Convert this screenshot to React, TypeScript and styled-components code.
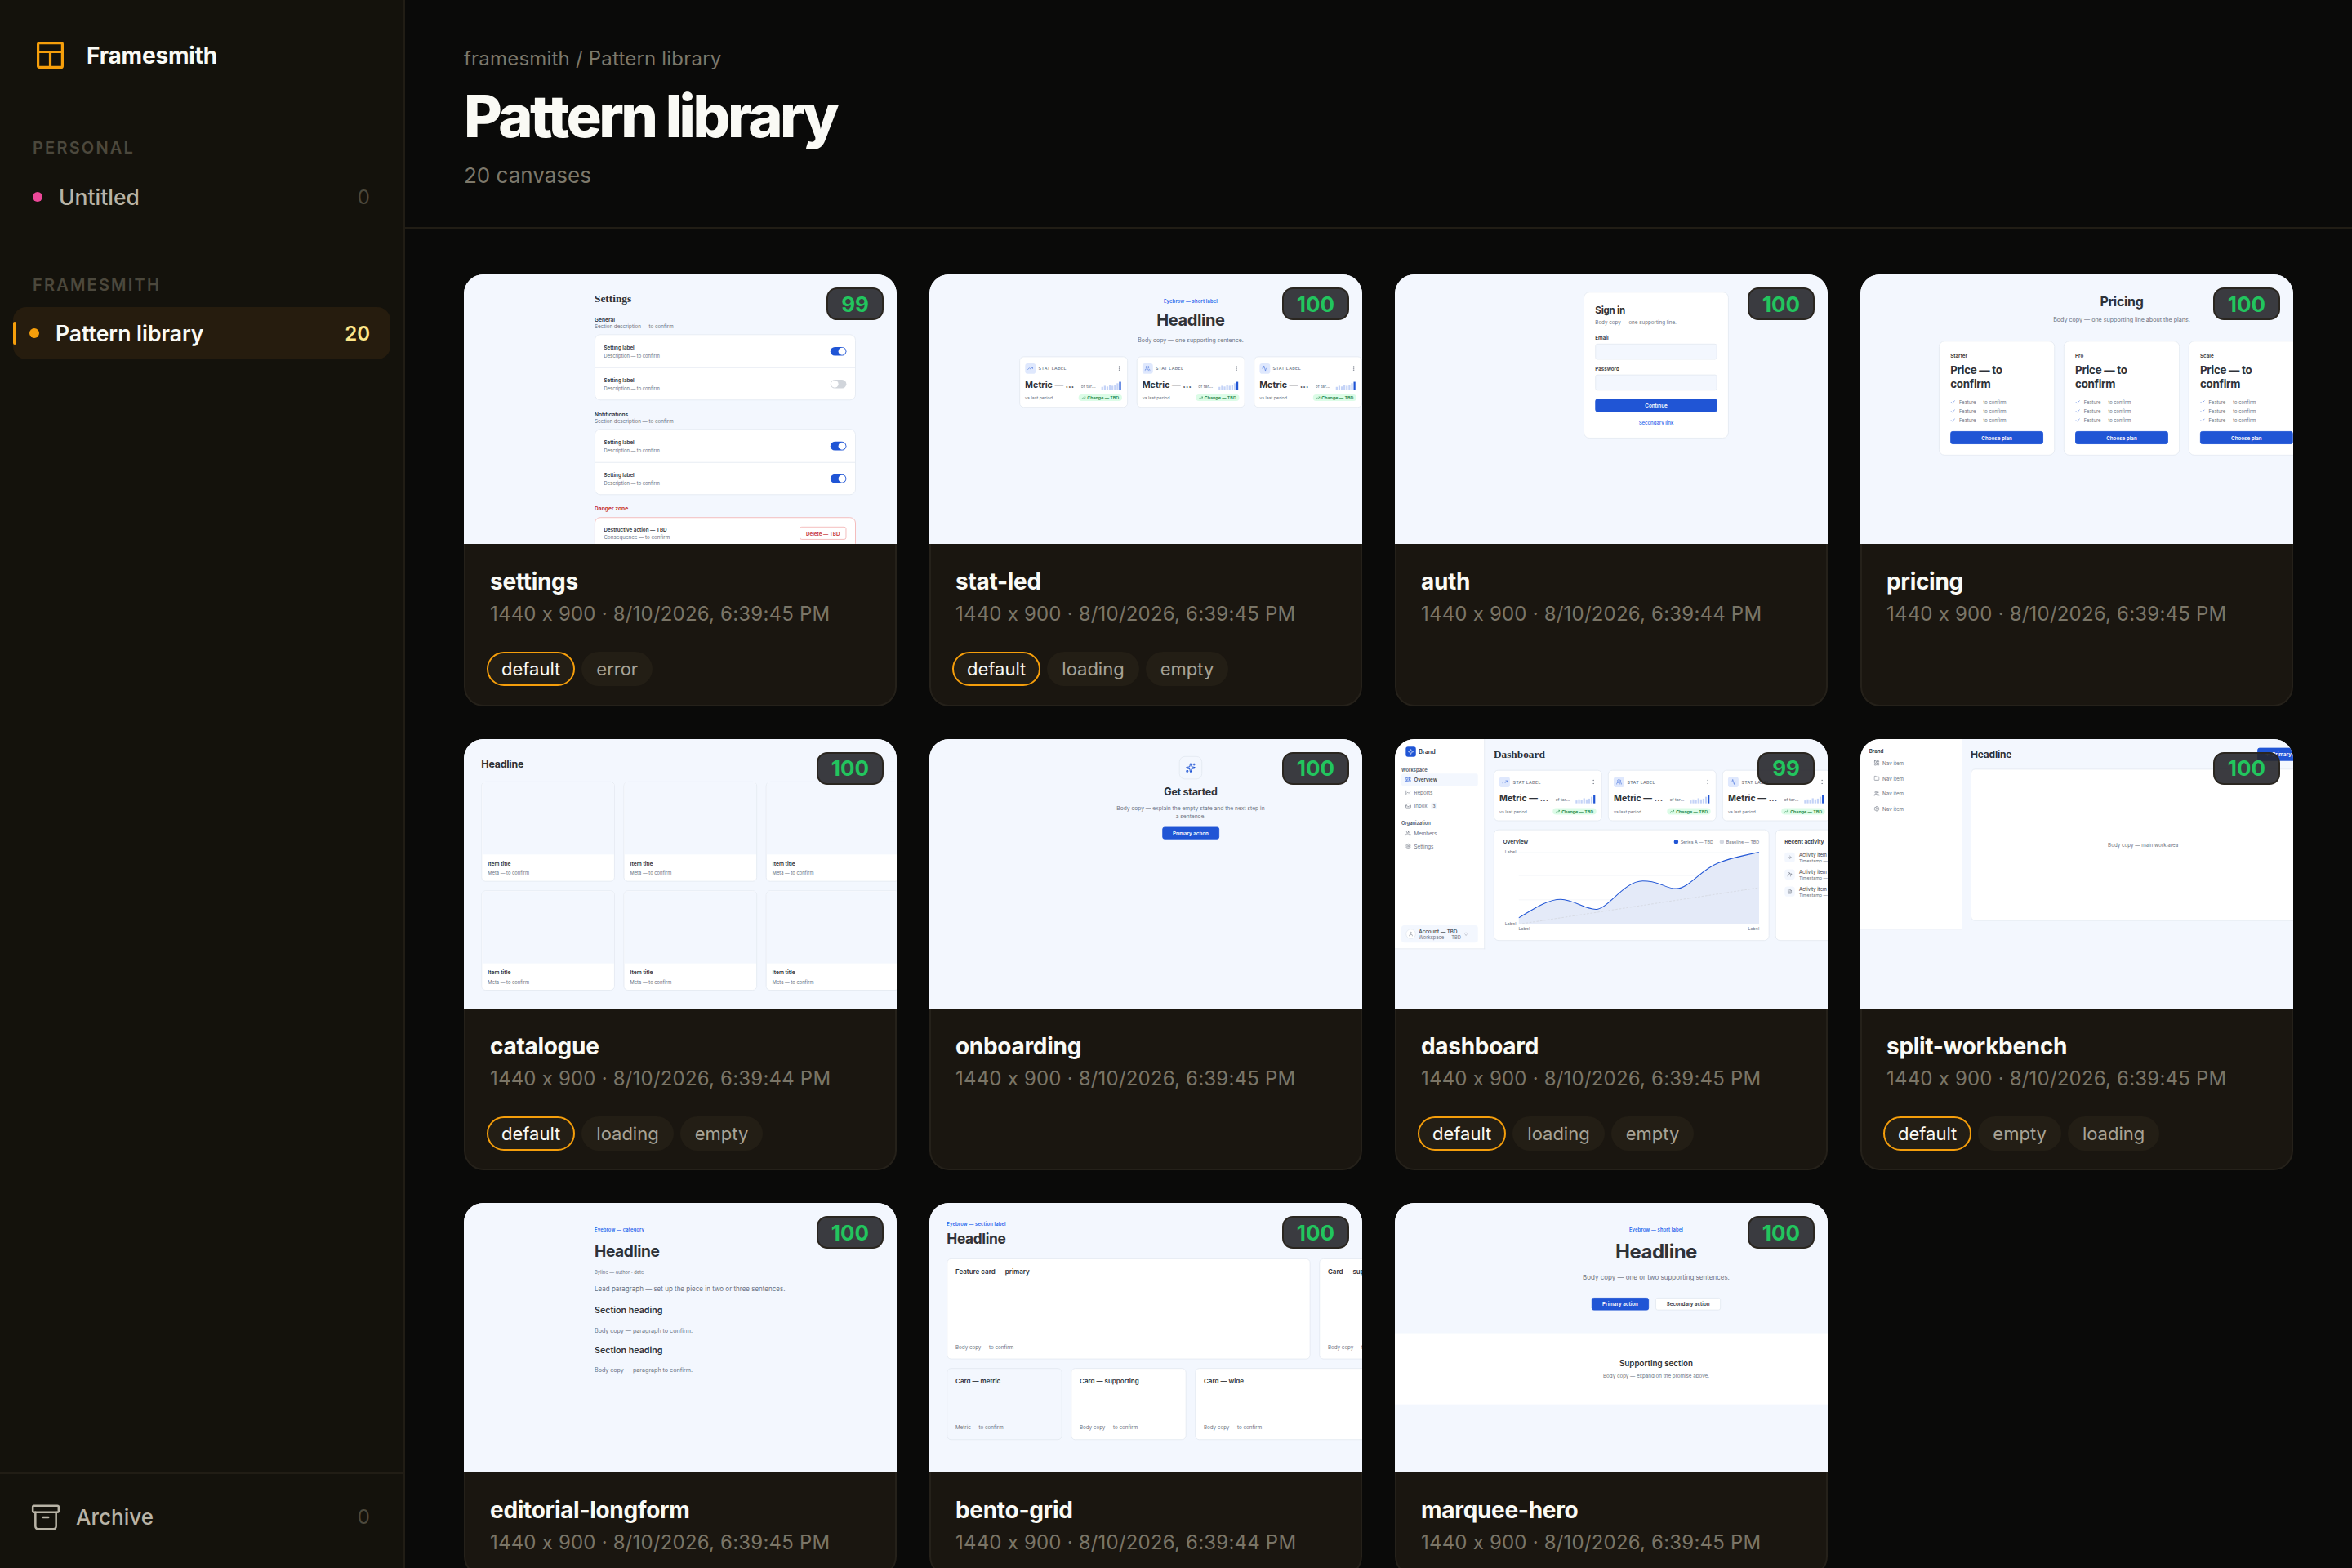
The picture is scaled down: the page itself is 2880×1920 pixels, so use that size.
import React from 'react';
import styled, { createGlobalStyle } from 'styled-components';
import {
    Activity,
    Archive,
    ArrowRight,
    ChartLine,
    Check,
    ChevronsUpDown,
    FileText,
    Folder,
    Inbox,
    LayoutDashboard,
    MoreVertical,
    Plus,
    Search,
    Settings,
    Sparkle,
    Sparkles,
    TrendingUp,
    User,
    UserPlus,
    Users,
} from 'lucide-react';

const BLUE = '#2055d5';
const INK = '#2f3238';
const MUTED = '#6b7280';
const LINE = '#e4e9f2';
const PAGE = '#f3f7fe';

const GlobalStyle = createGlobalStyle`
    * { box-sizing: border-box; }
    html, body { margin: 0; padding: 0; background: #0a0a09; }
    body {
        font-family: Inter, "Liberation Sans", sans-serif;
        font-feature-settings: "calt" 0;
    }
`;

const Shell = styled.div`
    display: flex;
    width: 2880px;
    height: 1920px;
    overflow: hidden;
    background: #0a0a09;
`;

/* ---- app sidebar ---- */

const Side = styled.aside`
    flex: 0 0 496px;
    display: flex;
    flex-direction: column;
    background: #14120c;
    border-right: 2px solid #211d15;
    padding-top: 50px;
`;

const Logo = styled.div`
    display: flex;
    align-items: center;
    gap: 28px;
    height: 35px;
    padding-left: 45px;
    font-size: 28px;
    font-weight: 700;
    letter-spacing: -0.2px;
    color: #fafaf5;
`;

const GroupLabel = styled.div<{ $top: number }>`
    margin-top: ${(p) => p.$top}px;
    padding-left: 40px;
    font-size: 20px;
    line-height: 26px;
    font-weight: 600;
    letter-spacing: 2.2px;
    color: #4c483c;
`;

const Project = styled.div<{ $active?: boolean }>`
    position: relative;
    display: flex;
    align-items: center;
    gap: 20px;
    height: 64px;
    margin: ${(p) => (p.$active ? '14px 16px 0' : '15px 16px 0')};
    padding: ${(p) => (p.$active ? '0 25px 0 20px' : '0 25px 0 24px')};
    border-radius: 16px;
    background: ${(p) => (p.$active ? '#261c0e' : 'transparent')};
    color: ${(p) => (p.$active ? '#fafaf5' : '#b8b3a6')};
    font-size: 26.5px;
    font-weight: ${(p) => (p.$active ? 600 : 500)};
`;

const ActiveBar = styled.span`
    position: absolute;
    left: 0;
    top: 18px;
    width: 4px;
    height: 28px;
    border-radius: 2px;
    background: #f59e0b;
`;

const Dot = styled.span<{ $color: string }>`
    flex: none;
    width: 12px;
    height: 12px;
    border-radius: 50%;
    background: ${(p) => p.$color};
`;

const Count = styled.span<{ $active?: boolean }>`
    margin-left: auto;
    font-size: 24px;
    font-weight: ${(p) => (p.$active ? 600 : 400)};
    color: ${(p) => (p.$active ? '#fde68a' : '#4c483c')};
`;

const SideFoot = styled.div`
    margin-top: auto;
    height: 117px;
    display: flex;
    align-items: center;
    gap: 18px;
    padding: 0 41px 10px 37px;
    border-top: 2px solid #211d15;
    font-size: 26px;
    font-weight: 500;
    color: #b8b3a6;
`;

/* ---- main ---- */

const Main = styled.main`
    flex: 1;
    min-width: 0;
`;

const Header = styled.header`
    height: 280px;
    padding: 56px 72px 0;
    border-bottom: 2px solid #211d15;
`;

const Crumb = styled.div`
    font-size: 24px;
    line-height: 32px;
    letter-spacing: 0.2px;
    color: #7d786a;
`;

const PageTitle = styled.h1`
    margin: 14px 0 0;
    font-size: 72px;
    line-height: 80px;
    font-weight: 800;
    letter-spacing: -3.5px;
    color: #fafaf5;
`;

const PageCount = styled.div`
    margin-top: 15px;
    font-size: 26px;
    line-height: 36px;
    color: #7d786a;
`;

const Grid = styled.div`
    display: grid;
    grid-template-columns: repeat(4, 530px);
    gap: 40px;
    padding: 56px 72px 0;
`;

const Card = styled.article`
    position: relative;
    border-radius: 24px;
    overflow: hidden;
    background: #1a1610;
    display: flex;
    flex-direction: column;
`;

const Thumb = styled.div`
    flex: none;
    height: 330px;
    overflow: hidden;
    background: ${PAGE};
`;

const Frame = styled.div`
    width: 1440px;
    height: 900px;
    background: ${PAGE};
    color: ${INK};
    transform: scale(0.4444);
    transform-origin: top left;
    overflow: hidden;
`;

const Score = styled.div`
    position: absolute;
    top: 16px;
    right: 16px;
    display: flex;
    align-items: center;
    height: 40px;
    padding: 0 16px;
    border-radius: 13px;
    background: rgba(38, 38, 43, 0.9);
    border: 2px solid #2a2620;
    color: #22c55e;
    font-size: 26px;
    font-weight: 700;
`;

const Info = styled.div`
    flex: 1;
    padding: 28px 30px 22.5px;
    border: 2px solid #25211a;
    border-top: none;
    border-radius: 0 0 24px 24px;
`;

const CardName = styled.h2`
    margin: 0;
    font-size: 28px;
    line-height: 36px;
    font-weight: 700;
    letter-spacing: -0.3px;
    color: #fafaf5;
`;

const CardMeta = styled.div`
    margin-top: 6px;
    font-size: 24px;
    line-height: 32px;
    letter-spacing: 0.2px;
    color: #7a7567;
    white-space: nowrap;
`;

const Tags = styled.div`
    display: flex;
    gap: 8px;
    margin: 30px 0 0 -4px;
`;

const Tag = styled.span<{ $on?: boolean }>`
    display: flex;
    align-items: center;
    height: 42px;
    padding: 0 16px;
    border-radius: 21px;
    font-size: 22px;
    background: #231e15;
    color: ${(p) => (p.$on ? '#fafaf5' : '#a8a396')};
    border: 2px solid ${(p) => (p.$on ? '#f59e0b' : 'transparent')};
`;

/* ---- shared bits of the little pages ---- */

const Eyebrow = styled.div<{ $top?: number }>`
    margin-top: ${(p) => p.$top ?? 0}px;
    font-size: 13px;
    line-height: 18px;
    font-weight: 600;
    letter-spacing: 0.4px;
    color: #2563eb;
`;

const Heading = styled.div<{ $size: number; $line: number; $top?: number }>`
    margin-top: ${(p) => p.$top ?? 0}px;
    font-size: ${(p) => p.$size}px;
    line-height: ${(p) => p.$line}px;
    font-weight: 700;
    letter-spacing: -0.02em;
    color: ${INK};
`;

const SerifTitle = styled.div`
    font-family: "Liberation Serif", serif;
    font-size: 30px;
    line-height: 36px;
    font-weight: 700;
    color: ${INK};
`;

const Copy = styled.div<{ $size?: number; $line?: number; $top?: number; $color?: string }>`
    margin-top: ${(p) => p.$top ?? 0}px;
    font-size: ${(p) => p.$size ?? 14}px;
    line-height: ${(p) => p.$line ?? 18}px;
    color: ${(p) => p.$color ?? MUTED};
`;

const Strong = styled.div<{ $size?: number; $line?: number; $top?: number }>`
    margin-top: ${(p) => p.$top ?? 0}px;
    font-size: ${(p) => p.$size ?? 14}px;
    line-height: ${(p) => p.$line ?? 20}px;
    font-weight: 600;
    color: ${INK};
`;

const Button = styled.div<{ $ghost?: boolean; $w?: number; $h?: number; $top?: number }>`
    display: flex;
    align-items: center;
    justify-content: center;
    gap: 6px;
    flex: none;
    width: ${(p) => (p.$w ? `${p.$w}px` : 'auto')};
    height: ${(p) => p.$h ?? 35}px;
    margin-top: ${(p) => p.$top ?? 0}px;
    border-radius: 6px;
    font-size: 14px;
    font-weight: 600;
    background: ${(p) => (p.$ghost ? '#fff' : BLUE)};
    border: 2px solid ${(p) => (p.$ghost ? LINE : BLUE)};
    color: ${(p) => (p.$ghost ? INK : '#fff')};
`;

/* settings */

const NarrowColumn = styled.div<{ $top: number }>`
    width: 720px;
    margin: 0 auto;
    padding-top: ${(p) => p.$top}px;
`;

const SettingsHead = styled.div<{ $top: number }>`
    margin-top: ${(p) => p.$top}px;
`;

const Panel = styled.div<{ $danger?: boolean; $top?: number }>`
    margin-top: ${(p) => p.$top ?? 12}px;
    background: #fff;
    border: 2px solid ${(p) => (p.$danger ? '#f3b4b4' : LINE)};
    border-radius: 16px;
`;

const SettingRow = styled.div<{ $h?: number }>`
    display: flex;
    align-items: center;
    justify-content: space-between;
    height: ${(p) => p.$h ?? 89}px;
    padding: 0 24px;
    & + & {
        border-top: 2px solid ${LINE};
    }
`;

const Toggle = styled.span<{ $on?: boolean }>`
    display: flex;
    justify-content: ${(p) => (p.$on ? 'flex-end' : 'flex-start')};
    width: 44px;
    height: 24px;
    padding: 2px;
    border-radius: 12px;
    background: ${(p) => (p.$on ? BLUE : '#d1d5db')};
    &::after {
        content: '';
        width: 20px;
        height: 20px;
        border-radius: 50%;
        background: #fff;
    }
`;

const DeleteButton = styled.div`
    display: flex;
    align-items: center;
    height: 36px;
    padding: 0 16px;
    border: 2px solid #f3b4b4;
    border-radius: 6px;
    font-size: 14px;
    font-weight: 600;
    color: #c53030;
`;

/* stats */

const Center = styled.div<{ $top: number }>`
    display: flex;
    flex-direction: column;
    align-items: center;
    text-align: center;
    padding-top: ${(p) => p.$top}px;
`;

const StatRow = styled.div<{ $gap: number; $top: number }>`
    display: flex;
    gap: ${(p) => p.$gap}px;
    margin-top: ${(p) => p.$top}px;
`;

const StatCard = styled.div`
    flex: none;
    width: 299px;
    height: 141px;
    padding: 16px 14px;
    background: #fff;
    border: 2px solid ${LINE};
    border-radius: 12px;
    text-align: left;
`;

const StatTop = styled.div`
    display: flex;
    align-items: center;
    gap: 8px;
    height: 30px;
    color: ${MUTED};
`;

const IconBox = styled.span<{ $size?: number; $bg?: string; $color?: string }>`
    flex: none;
    display: flex;
    align-items: center;
    justify-content: center;
    width: ${(p) => p.$size ?? 29}px;
    height: ${(p) => p.$size ?? 29}px;
    border-radius: 7px;
    background: ${(p) => p.$bg ?? '#dfe8fd'};
    color: ${(p) => p.$color ?? BLUE};
`;

const StatLabel = styled.span`
    flex: 1;
    font-size: 12px;
    font-weight: 500;
    letter-spacing: 0.7px;
    color: ${MUTED};
`;

const StatMid = styled.div`
    display: flex;
    align-items: flex-end;
    height: 38px;
    margin-top: 10px;
`;

const StatValue = styled.span`
    width: 137px;
    font-size: 24px;
    line-height: 36px;
    font-weight: 700;
    color: ${INK};
    white-space: nowrap;
    overflow: hidden;
    text-overflow: ellipsis;
`;

const StatSub = styled.span`
    width: 42px;
    margin: 0 0 5px 17px;
    font-size: 12px;
    line-height: 16px;
    color: ${MUTED};
    white-space: nowrap;
    overflow: hidden;
    text-overflow: ellipsis;
`;

const Bars = styled.span`
    display: flex;
    align-items: flex-end;
    gap: 2px;
    height: 22px;
    margin: 0 0 4px 14px;
`;

const Bar = styled.span<{ $h: number; $last?: boolean }>`
    width: 5px;
    height: ${(p) => p.$h}px;
    background: ${(p) => (p.$last ? BLUE : '#c4d3f7')};
`;

const StatFoot = styled.div`
    display: flex;
    align-items: center;
    justify-content: space-between;
    height: 18px;
    margin-top: 9px;
    font-size: 12px;
    color: ${MUTED};
`;

const Delta = styled.span`
    display: flex;
    align-items: center;
    gap: 4px;
    height: 18px;
    padding: 0 8px;
    border-radius: 9px;
    background: #dcfce7;
    color: #15803d;
    font-weight: 600;
`;

/* auth + pricing */

const AuthCard = styled.div`
    width: 400px;
    height: 404px;
    margin: 48px auto 0;
    padding: 33px 30px;
    background: #fff;
    border: 2px solid ${LINE};
    border-radius: 16px;
`;

const Field = styled.div<{ $top: number }>`
    height: 44px;
    margin-top: ${(p) => p.$top}px;
    background: ${PAGE};
    border: 2px solid ${LINE};
    border-radius: 6px;
`;

const LinkText = styled.div`
    margin-top: 22px;
    text-align: center;
    font-size: 13.5px;
    line-height: 18px;
    font-weight: 500;
    color: #2563eb;
`;

const PriceGrid = styled.div`
    display: grid;
    grid-template-columns: repeat(3, 320px);
    gap: 24px;
    justify-content: center;
    width: 100%;
    margin-top: 46px;
    text-align: left;
`;

const PriceCard = styled.div`
    height: 316px;
    padding: 30px;
    background: #fff;
    border: 2px solid ${LINE};
    border-radius: 16px;
`;

const FeatureList = styled.div`
    margin-top: 18px;
    margin-bottom: 18px;
`;

const Feature = styled.div`
    display: flex;
    align-items: center;
    gap: 10px;
    height: 25px;
    font-size: 13px;
    color: ${MUTED};
`;

/* catalogue */

const Pad = styled.div<{ $top: number }>`
    padding: ${(p) => p.$top}px 48px 0;
`;

const ItemGrid = styled.div`
    display: grid;
    grid-template-columns: repeat(3, 368px);
    gap: 24px;
    margin-top: 31px;
`;

const Item = styled.div`
    height: 276px;
    background: #fff;
    border: 2px solid ${LINE};
    border-radius: 12px;
    overflow: hidden;
`;

const ItemImage = styled.div`
    height: 199px;
    background: ${PAGE};
`;

const ItemText = styled.div`
    padding: 15px 16px;
`;

/* onboarding */

const EmptyIcon = styled.div`
    display: flex;
    align-items: center;
    justify-content: center;
    width: 64px;
    height: 64px;
    background: ${PAGE};
    border: 2px solid ${LINE};
    border-radius: 16px;
    color: ${BLUE};
`;

/* dashboard + workbench */

const Split = styled.div`
    display: flex;
    align-items: flex-start;
    height: 100%;
`;

const DashSide = styled.div`
    flex: none;
    display: flex;
    flex-direction: column;
    width: 248px;
    height: 579px;
    padding: 21px 17px 16px 18px;
    background: #fff;
    border-right: 2px solid ${LINE};
    border-bottom: 2px solid ${LINE};
`;

const BrandRow = styled.div`
    display: flex;
    align-items: center;
    gap: 8px;
    height: 28px;
    margin-left: 12px;
    font-size: 16px;
    font-weight: 600;
`;

const BrandMark = styled.span`
    display: flex;
    align-items: center;
    justify-content: center;
    width: 28px;
    height: 28px;
    border-radius: 6px;
    background: ${BLUE};
    color: #fff;
`;

const NavLabel = styled.div<{ $top: number }>`
    margin-top: ${(p) => p.$top}px;
    font-size: 13px;
    line-height: 16px;
    font-weight: 600;
    color: #4b5563;
`;

const NavItem = styled.div<{ $active?: boolean; $h?: number; $pad?: number }>`
    display: flex;
    align-items: center;
    gap: 8px;
    height: ${(p) => p.$h ?? 34}px;
    margin-top: 2px;
    padding-left: ${(p) => p.$pad ?? 11}px;
    border-radius: 6px;
    font-size: 14px;
    font-weight: ${(p) => (p.$active ? 500 : 400)};
    background: ${(p) => (p.$active ? PAGE : 'transparent')};
    color: ${(p) => (p.$active ? INK : MUTED)};
    svg {
        color: ${(p) => (p.$active ? BLUE : MUTED)};
    }
`;

const NavBadge = styled.span`
    display: flex;
    align-items: center;
    justify-content: center;
    width: 18px;
    height: 18px;
    margin-left: 2px;
    border-radius: 5px;
    background: ${PAGE};
    font-size: 11px;
    font-weight: 600;
`;

const AccountCard = styled.div`
    display: flex;
    align-items: center;
    gap: 8px;
    height: 48px;
    margin-top: auto;
    padding: 0 12px;
    border-radius: 8px;
    background: ${PAGE};
`;

const Avatar = styled.span`
    flex: none;
    display: flex;
    align-items: center;
    justify-content: center;
    width: 28px;
    height: 28px;
    border-radius: 50%;
    background: #fff;
    border: 2px solid ${LINE};
    color: ${MUTED};
`;

const AccountName = styled.div`
    font-size: 14px;
    line-height: 17px;
    font-weight: 500;
    color: ${INK};
    white-space: nowrap;
`;

const AccountSub = styled.div`
    font-size: 13px;
    line-height: 16px;
    color: ${MUTED};
    white-space: nowrap;
`;

const DashMain = styled.div`
    flex: none;
    width: 1192px;
    padding: 24px;
`;

const TitleRow = styled.div`
    display: flex;
    align-items: center;
    justify-content: space-between;
    height: 36px;
`;

const SearchBox = styled.div`
    flex: none;
    display: flex;
    align-items: center;
    gap: 8px;
    width: 240px;
    height: 36px;
    padding: 0 12px;
    margin-right: -50px;
    background: #fff;
    border: 2px solid ${LINE};
    border-radius: 6px;
    font-size: 13px;
    color: ${MUTED};
`;

const ChartRow = styled.div`
    display: flex;
    gap: 16px;
    margin-top: 23px;
`;

const ChartCard = styled.div`
    flex: none;
    width: 760px;
    height: 307px;
    padding: 22px 24px;
    background: #fff;
    border: 2px solid ${LINE};
    border-radius: 14px;
`;

const ChartHead = styled.div`
    display: flex;
    align-items: center;
    justify-content: space-between;
    height: 20px;
    padding-right: 2px;
`;

const Legend = styled.div`
    display: flex;
    align-items: center;
    gap: 6px;
    font-size: 12px;
    color: ${MUTED};
`;

const LegendGap = styled.span`
    width: 6px;
`;

const ChartBody = styled.div`
    display: grid;
    grid-template-columns: 36px 663px;
    column-gap: 7px;
    margin-top: 18px;
`;

const YAxis = styled.div`
    display: flex;
    flex-direction: column;
    justify-content: space-between;
    align-items: flex-end;
    height: 215px;
    margin-top: -8px;
    font-size: 12px;
    line-height: 16px;
    color: ${MUTED};
`;

const XAxis = styled.div`
    grid-column: 2;
    display: flex;
    justify-content: space-between;
    margin-top: -4px;
    font-size: 12px;
    line-height: 16px;
    color: ${MUTED};
`;

const ActivityCard = styled.div`
    flex: none;
    width: 300px;
    height: 307px;
    padding: 22px 24px;
    background: #fff;
    border: 2px solid ${LINE};
    border-radius: 14px;
`;

const ActivityItem = styled.div`
    display: flex;
    gap: 12px;
    height: 28px;
    margin-top: 19px;
    &:first-of-type {
        margin-top: 17px;
    }
`;

const WorkSide = styled.div`
    flex: none;
    width: 280px;
    height: 525px;
    padding: 24px;
    background: #fff;
    border-bottom: 2px solid ${LINE};
`;

const WorkMain = styled.div`
    flex: none;
    width: 998px;
    padding: 24px;
`;

const WorkPanel = styled.div`
    display: flex;
    align-items: center;
    justify-content: center;
    height: 419px;
    margin-top: 22px;
    background: #fff;
    border: 2px solid ${LINE};
    border-radius: 12px;
`;

/* bento + marquee */

const BentoGrid = styled.div`
    display: grid;
    grid-template-columns: repeat(4, 318px);
    grid-template-rows: 278px 198px;
    gap: 24px;
    margin-top: 32px;
`;

const BentoCard = styled.div<{ $span?: number; $flat?: boolean }>`
    grid-column: span ${(p) => p.$span ?? 1};
    display: flex;
    flex-direction: column;
    justify-content: space-between;
    padding: 24px 22px;
    background: ${(p) => (p.$flat ? PAGE : '#fff')};
    border: 2px solid ${LINE};
    border-radius: 12px;
`;

const Hero = styled.div`
    height: 359px;
    padding-top: 64px;
    display: flex;
    flex-direction: column;
    align-items: center;
    text-align: center;
`;

const ButtonRow = styled.div`
    display: flex;
    gap: 18px;
    margin-top: 41px;
`;

const Band = styled.div`
    display: flex;
    flex-direction: column;
    align-items: center;
    justify-content: center;
    height: 196px;
    background: #fff;
`;

/* ---- previews ---- */

const SettingPair = ({ on }: { on: boolean[] }) => (
    <Panel>
        {on.map((value, i) => (
            <SettingRow key={i}>
                <div>
                    <Strong>Setting label</Strong>
                    <Copy $size={13} $top={4}>
                        Description — to confirm
                    </Copy>
                </div>
                <Toggle $on={value} />
            </SettingRow>
        ))}
    </Panel>
);

const SettingsPreview = () => (
    <NarrowColumn $top={48}>
        <SerifTitle>Settings</SerifTitle>
        <SettingsHead $top={33}>
            <Strong $size={15} $line={18}>
                General
            </Strong>
            <Copy>Section description — to confirm</Copy>
        </SettingsHead>
        <SettingPair on={[true, false]} />
        <SettingsHead $top={31}>
            <Strong $size={15} $line={18}>
                Notifications
            </Strong>
            <Copy>Section description — to confirm</Copy>
        </SettingsHead>
        <SettingPair on={[true, true]} />
        <SettingsHead $top={29}>
            <Copy $size={15} $color="#c53030">
                <b>Danger zone</b>
            </Copy>
        </SettingsHead>
        <Panel $danger $top={14}>
            <SettingRow $h={84}>
                <div>
                    <Strong>Destructive action — TBD</Strong>
                    <Copy $top={1}>Consequence — to confirm</Copy>
                </div>
                <DeleteButton>Delete — TBD</DeleteButton>
            </SettingRow>
        </Panel>
    </NarrowColumn>
);

const barHeights = [8, 11, 9, 14, 11, 13, 18, 22];

const Stat = ({ icon: Icon }: { icon: any }) => (
    <StatCard>
        <StatTop>
            <IconBox>
                <Icon size={16} strokeWidth={1.6} />
            </IconBox>
            <StatLabel>STAT LABEL</StatLabel>
            <MoreVertical size={16} />
        </StatTop>
        <StatMid>
            <StatValue>Metric — to confirm</StatValue>
            <StatSub>of target</StatSub>
            <Bars>
                {barHeights.map((h, i) => (
                    <Bar key={i} $h={h} $last={i === barHeights.length - 1} />
                ))}
            </Bars>
        </StatMid>
        <StatFoot>
            vs last period
            <Delta>
                <TrendingUp size={12} />
                Change — TBD
            </Delta>
        </StatFoot>
    </StatCard>
);

const statIcons = [TrendingUp, Users, Activity];

const StatLedPreview = () => (
    <Center $top={64}>
        <Eyebrow>Eyebrow — short label</Eyebrow>
        <Heading $size={45} $line={48} $top={19}>
            Headline
        </Heading>
        <Copy $size={15.6} $line={24} $top={20}>
            Body copy — one supporting sentence.
        </Copy>
        <StatRow $gap={24} $top={33}>
            {statIcons.map((icon, i) => (
                <Stat key={i} icon={icon} />
            ))}
        </StatRow>
    </Center>
);

const AuthPreview = () => (
    <AuthCard>
        <Heading $size={26} $line={32}>
            Sign in
        </Heading>
        <Copy $line={20} $top={8}>
            Body copy — one supporting line.
        </Copy>
        <Strong $size={14} $line={18} $top={23}>
            Email
        </Strong>
        <Field $top={7} />
        <Strong $size={14} $line={18} $top={16}>
            Password
        </Strong>
        <Field $top={7} />
        <Button $h={36} $top={23}>
            Continue
        </Button>
        <LinkText>Secondary link</LinkText>
    </AuthCard>
);

const PricingPreview = () => (
    <Center $top={52}>
        <Heading $size={36} $line={44}>
            Pricing
        </Heading>
        <Copy $size={16} $line={24} $top={17}>
            Body copy — one supporting line about the plans.
        </Copy>
        <PriceGrid>
            {['Starter', 'Pro', 'Scale'].map((plan) => (
                <PriceCard key={plan}>
                    <Strong $size={14}>{plan}</Strong>
                    <Heading $size={30} $line={38} $top={10}>
                        Price — to confirm
                    </Heading>
                    <FeatureList>
                        {[0, 1, 2].map((i) => (
                            <Feature key={i}>
                                <Check size={14} color={BLUE} />
                                Feature — to confirm
                            </Feature>
                        ))}
                    </FeatureList>
                    <Button $h={36}>Choose plan</Button>
                </PriceCard>
            ))}
        </PriceGrid>
    </Center>
);

const CataloguePreview = () => (
    <Pad $top={50}>
        <Heading $size={28} $line={36}>
            Headline
        </Heading>
        <ItemGrid>
            {[0, 1, 2, 3, 4, 5].map((i) => (
                <Item key={i}>
                    <ItemImage />
                    <ItemText>
                        <Strong $size={15}>Item title</Strong>
                        <Copy $size={13} $line={16} $top={8}>
                            Meta — to confirm
                        </Copy>
                    </ItemText>
                </Item>
            ))}
        </ItemGrid>
    </Pad>
);

const OnboardingBody = styled(Copy)`
    max-width: 420px;
`;

const OnboardingPreview = () => (
    <Center $top={47}>
        <EmptyIcon>
            <Sparkles size={28} strokeWidth={2} />
        </EmptyIcon>
        <Heading $size={28} $line={32} $top={19}>
            Get started
        </Heading>
        <OnboardingBody $size={15} $line={23} $top={17}>
            Body copy — explain the empty state and the next step in a sentence.
        </OnboardingBody>
        <Button $w={157} $h={34} $top={17}>
            Primary action
        </Button>
    </Center>
);

const OverviewChart = () => (
    <svg width="663" height="199" viewBox="0 0 663 199">
        <line x1="0" y1="0" x2="663" y2="0" stroke="#eef1f6" strokeWidth="1.5" />
        <line x1="0" y1="65" x2="663" y2="65" stroke="#eef1f6" strokeWidth="1.5" />
        <line x1="0" y1="132" x2="663" y2="132" stroke="#eef1f6" strokeWidth="1.5" />
        <path
            d="M0 181.5C40 158 80 130 116.5 130.5S180 158 213 158S290 80 342 80S400 101 434.6 101S500 50 551 30S620 12 663 0V199H0Z"
            fill="#e4eaf8"
        />
        <line x1="0" y1="199" x2="663" y2="98.5" stroke="#d5d9e2" strokeWidth="2" strokeDasharray="6 4" />
        <path
            d="M0 181.5C40 158 80 130 116.5 130.5S180 158 213 158S290 80 342 80S400 101 434.6 101S500 50 551 30S620 12 663 0"
            fill="none"
            stroke={BLUE}
            strokeWidth="2.4"
        />
    </svg>
);

const DashboardPreview = () => (
    <Split>
        <DashSide>
            <BrandRow>
                <BrandMark>
                    <Sparkle size={16} />
                </BrandMark>
                Brand
            </BrandRow>
            <NavLabel $top={28}>Workspace</NavLabel>
            <NavItem $active>
                <LayoutDashboard size={16} />
                Overview
            </NavItem>
            <NavItem>
                <ChartLine size={16} />
                Reports
            </NavItem>
            <NavItem>
                <Inbox size={16} />
                Inbox
                <NavBadge>3</NavBadge>
            </NavItem>
            <NavLabel $top={23}>Organization</NavLabel>
            <NavItem>
                <Users size={16} />
                Members
            </NavItem>
            <NavItem>
                <Settings size={16} />
                Settings
            </NavItem>
            <AccountCard>
                <Avatar>
                    <User size={14} />
                </Avatar>
                <div>
                    <AccountName>Account — TBD</AccountName>
                    <AccountSub>Workspace — TBD</AccountSub>
                </div>
                <ChevronsUpDown size={12} color={MUTED} />
            </AccountCard>
        </DashSide>
        <DashMain>
            <TitleRow>
                <SerifTitle>Dashboard</SerifTitle>
                <SearchBox>
                    <Search size={14} />
                    Search
                </SearchBox>
            </TitleRow>
            <StatRow $gap={16} $top={25}>
                {statIcons.map((icon, i) => (
                    <Stat key={i} icon={icon} />
                ))}
            </StatRow>
            <ChartRow>
                <ChartCard>
                    <ChartHead>
                        <Strong $size={15}>Overview</Strong>
                        <Legend>
                            <Dot $color={BLUE} />
                            Series A — TBD
                            <LegendGap />
                            <Dot $color="#d5d9e2" />
                            Baseline — TBD
                        </Legend>
                    </ChartHead>
                    <ChartBody>
                        <YAxis>
                            <span>Label</span>
                            <span>Label</span>
                        </YAxis>
                        <OverviewChart />
                        <XAxis>
                            <span>Label</span>
                            <span>Label</span>
                        </XAxis>
                    </ChartBody>
                </ChartCard>
                <ActivityCard>
                    <Strong $size={15}>Recent activity</Strong>
                    {[ArrowRight, UserPlus, FileText].map((Icon, i) => (
                        <ActivityItem key={i}>
                            <IconBox $size={28} $bg={PAGE} $color={MUTED}>
                                <Icon size={14} />
                            </IconBox>
                            <div>
                                <Copy $size={13} $line={16} $color={INK}>
                                    Activity item — to confirm
                                </Copy>
                                <Copy $size={12} $line={16}>
                                    Timestamp — TBD
                                </Copy>
                            </div>
                        </ActivityItem>
                    ))}
                </ActivityCard>
            </ChartRow>
        </DashMain>
    </Split>
);

const WorkbenchPreview = () => (
    <Split>
        <WorkSide>
            <Strong $size={14}>Brand</Strong>
            {[LayoutDashboard, Folder, Users, Settings].map((Icon, i) => (
                <NavItem key={i} $h={40} $pad={13}>
                    <Icon size={16} />
                    Nav item
                </NavItem>
            ))}
        </WorkSide>
        <WorkMain>
            <TitleRow>
                <Heading $size={27} $line={32}>
                    Headline
                </Heading>
                <Button $w={160} $h={36}>
                    <Plus size={14} />
                    Primary action
                </Button>
            </TitleRow>
            <WorkPanel>
                <Copy>Body copy — main work area</Copy>
            </WorkPanel>
        </WorkMain>
    </Split>
);

const EditorialPreview = () => (
    <NarrowColumn $top={65}>
        <Eyebrow>Eyebrow — category</Eyebrow>
        <Heading $size={43} $line={48} $top={26}>
            Headline
        </Heading>
        <Copy $size={13} $top={24}>
            Byline — author · date
        </Copy>
        <Copy $size={18} $line={28} $top={25}>
            Lead paragraph — set up the piece in two or three sentences.
        </Copy>
        <Strong $size={24} $line={28} $top={29}>
            Section heading
        </Strong>
        <Copy $size={16} $line={24} $top={31}>
            Body copy — paragraph to confirm.
        </Copy>
        <Strong $size={24} $line={28} $top={28}>
            Section heading
        </Strong>
        <Copy $size={16} $line={24} $top={28}>
            Body copy — paragraph to confirm.
        </Copy>
    </NarrowColumn>
);

const bento = [
    { title: 'Feature card — primary', body: 'Body copy — to confirm', span: 3 },
    { title: 'Card — supporting', body: 'Body copy — to confirm' },
    { title: 'Card — metric', body: 'Metric — to confirm', flat: true },
    { title: 'Card — supporting', body: 'Body copy — to confirm' },
    { title: 'Card — wide', body: 'Body copy — to confirm', span: 2 },
];

const BentoPreview = () => (
    <Pad $top={49}>
        <Eyebrow>Eyebrow — section label</Eyebrow>
        <Heading $size={39} $line={44} $top={10}>
            Headline
        </Heading>
        <BentoGrid>
            {bento.map((card, i) => (
                <BentoCard key={i} $span={card.span} $flat={card.flat}>
                    <Strong $size={18}>{card.title}</Strong>
                    <Copy $size={14} $line={16}>
                        {card.body}
                    </Copy>
                </BentoCard>
            ))}
        </BentoGrid>
    </Pad>
);

const MarqueePreview = () => (
    <>
        <Hero>
            <Eyebrow>Eyebrow — short label</Eyebrow>
            <Heading $size={54} $line={56} $top={25}>
                Headline
            </Heading>
            <Copy $size={18} $line={28} $top={29}>
                Body copy — one or two supporting sentences.
            </Copy>
            <ButtonRow>
                <Button $w={158}>Primary action</Button>
                <Button $w={180} $ghost>
                    Secondary action
                </Button>
            </ButtonRow>
        </Hero>
        <Band>
            <Strong $size={22} $line={30}>
                Supporting section
            </Strong>
            <Copy $line={20} $top={10}>
                Body copy — expand on the promise above.
            </Copy>
        </Band>
    </>
);

const canvases = [
    { name: 'settings', time: '6:39:45', score: 99, tags: ['default', 'error'], Preview: SettingsPreview },
    { name: 'stat-led', time: '6:39:45', score: 100, tags: ['default', 'loading', 'empty'], Preview: StatLedPreview },
    { name: 'auth', time: '6:39:44', score: 100, tags: [], Preview: AuthPreview },
    { name: 'pricing', time: '6:39:45', score: 100, tags: [], Preview: PricingPreview },
    { name: 'catalogue', time: '6:39:44', score: 100, tags: ['default', 'loading', 'empty'], Preview: CataloguePreview },
    { name: 'onboarding', time: '6:39:45', score: 100, tags: [], Preview: OnboardingPreview },
    { name: 'dashboard', time: '6:39:45', score: 99, tags: ['default', 'loading', 'empty'], Preview: DashboardPreview },
    { name: 'split-workbench', time: '6:39:45', score: 100, tags: ['default', 'empty', 'loading'], Preview: WorkbenchPreview },
    { name: 'editorial-longform', time: '6:39:45', score: 100, tags: [], Preview: EditorialPreview },
    { name: 'bento-grid', time: '6:39:44', score: 100, tags: [], Preview: BentoPreview },
    { name: 'marquee-hero', time: '6:39:45', score: 100, tags: [], Preview: MarqueePreview },
];

const App = () => (
    <Shell>
        <GlobalStyle />
        <Side>
            <Logo>
                <svg width="33" height="33" viewBox="0 0 33 33" fill="none" stroke="#f59e0b" strokeWidth="3.2">
                    <rect x="1.6" y="1.6" width="29.8" height="29.8" rx="1.5" />
                    <path d="M1.5 12.5H31.5M16.5 12.5V31.5" />
                </svg>
                Framesmith
            </Logo>
            <GroupLabel $top={83}>PERSONAL</GroupLabel>
            <Project>
                <Dot $color="#ec4899" />
                Untitled
                <Count>0</Count>
            </Project>
            <GroupLabel $top={63}>FRAMESMITH</GroupLabel>
            <Project $active>
                <ActiveBar />
                <Dot $color="#f59e0b" />
                Pattern library
                <Count $active>20</Count>
            </Project>
            <SideFoot>
                <Archive size={38} strokeWidth={1.6} />
                Archive
                <Count>0</Count>
            </SideFoot>
        </Side>
        <Main>
            <Header>
                <Crumb>framesmith / Pattern library</Crumb>
                <PageTitle>Pattern library</PageTitle>
                <PageCount>20 canvases</PageCount>
            </Header>
            <Grid>
                {canvases.map(({ name, time, score, tags, Preview }) => (
                    <Card key={name}>
                        <Thumb>
                            <Frame>
                                <Preview />
                            </Frame>
                        </Thumb>
                        <Score>{score}</Score>
                        <Info>
                            <CardName>{name}</CardName>
                            <CardMeta>1440 x 900 · 8/10/2026, {time} PM</CardMeta>
                            {tags.length > 0 && (
                                <Tags>
                                    {tags.map((tag, i) => (
                                        <Tag key={tag} $on={i === 0}>
                                            {tag}
                                        </Tag>
                                    ))}
                                </Tags>
                            )}
                        </Info>
                    </Card>
                ))}
            </Grid>
        </Main>
    </Shell>
);

export default App;
